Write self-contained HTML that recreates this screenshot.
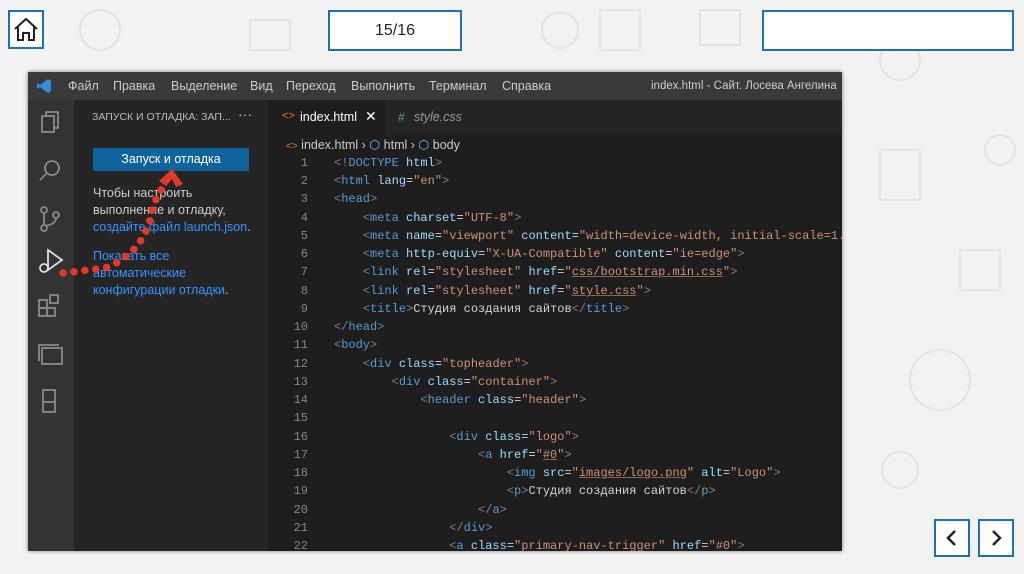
<!DOCTYPE html>
<html><head><meta charset="utf-8"><style>
*{margin:0;padding:0;box-sizing:border-box}
body{width:1024px;height:574px;overflow:hidden;background:#f2f2f2;font-family:"Liberation Sans",sans-serif;position:relative}
.box{position:absolute;border:2px solid #1a6fbf;background:#fff}
.vs{position:absolute;left:28px;top:72px;width:814px;height:479px;background:#1e1e1e;overflow:hidden;box-shadow:0 0 4px rgba(0,0,0,.5)}
.title{position:absolute;left:0;top:0;width:814px;height:28px;background:#3a3a3a;color:#ccc;font-size:12.5px;white-space:nowrap}
.title span{position:absolute;top:7px}
.act{position:absolute;left:0;top:28px;width:46px;height:451px;background:#333}
.side{position:absolute;left:46px;top:28px;width:194px;height:451px;background:#252526;color:#ccc;font-size:12.5px}
.mono{font-family:"Liberation Mono",monospace;font-size:12px}
.ln{position:absolute;left:255px;width:25px;text-align:right;color:#858585}
.cd{position:absolute;left:306px;white-space:pre;color:#d4d4d4}
.b{color:#808080}.t{color:#569cd6}.a{color:#9cdcfe}.s{color:#ce9178}
.u{text-decoration:underline;text-decoration-color:#8a6a50}
</style></head><body>
<svg style="position:absolute;left:0;top:0" width="1024" height="574">
<g fill="none" stroke="#e3e3e3" stroke-width="2">
<circle cx="100" cy="30" r="20"/><rect x="250" y="20" width="40" height="30"/><circle cx="560" cy="30" r="18"/><rect x="600" y="10" width="40" height="40"/><circle cx="900" cy="60" r="20"/><circle cx="940" cy="380" r="30"/><rect x="880" y="150" width="40" height="50"/><rect x="960" y="250" width="40" height="40"/><circle cx="900" cy="470" r="18"/><rect x="700" y="10" width="40" height="35"/><circle cx="1000" cy="150" r="15"/></g></svg>
<div class="box" style="left:8px;top:10px;width:36px;height:39px"><svg width="32" height="35" viewBox="0 0 32 35"><path d="M5 17 L16 7 L27 17 M8 15 V28 H13 V21 H19 V28 H24 V15" fill="none" stroke="#222" stroke-width="2"/></svg></div>
<div class="box" style="left:328px;top:10px;width:134px;height:41px;text-align:center;line-height:37px;font-size:16px;color:#222">15/16</div>
<div class="box" style="left:762px;top:10px;width:252px;height:41px"></div>
<div class="box" style="left:934px;top:519px;width:36px;height:38px"><svg width="32" height="34"><path d="M19 10 L12 17 L19 24" fill="none" stroke="#222" stroke-width="2.5"/></svg></div>
<div class="box" style="left:978px;top:519px;width:36px;height:38px"><svg width="32" height="34"><path d="M13 10 L20 17 L13 24" fill="none" stroke="#222" stroke-width="2.5"/></svg></div>

<div class="vs">
<div class="title">
<svg style="position:absolute;left:8px;top:6px" width="16" height="16"><path d="M12 1 L15 3 V13 L12 15 L4 9 L1 11 V5 L4 7 Z" fill="#2f8fe0"/></svg>
<span style="left:40px">Файл</span><span style="left:85px">Правка</span><span style="left:143px">Выделение</span><span style="left:222px">Вид</span><span style="left:258px">Переход</span><span style="left:323px">Выполнить</span><span style="left:401px">Терминал</span><span style="left:474px">Справка</span><span style="left:623px;font-size:11.5px;top:8px">index.html - Сайт. Лосева Ангелина</span></div>
<div class="act">
<svg width="46" height="451" fill="none" stroke="#8a8a8a" stroke-width="1.8">
<rect x="14" y="16" width="12" height="16"/><path d="M18 16 V12 H30 V28 H26"/>
<circle cx="24" cy="68" r="7"/><path d="M19 73 L12 80"/>
<circle cx="16" cy="110" r="3"/><circle cx="16" cy="128" r="3"/><circle cx="28" cy="115" r="3"/><path d="M16 113 V125 M28 118 Q28 124 17 126"/>
<path d="M20 150 L34 160 L20 170 Z" stroke="#ddd"/><circle cx="16" cy="168" r="4" stroke="#ddd"/>
<rect x="11" y="208" width="8" height="8"/><rect x="19" y="208" width="8" height="8"/><rect x="11" y="200" width="8" height="8"/><rect x="22" y="195" width="8" height="8"/>
<rect x="14" y="248" width="20" height="16"/><path d="M11 261 V245 H31"/>
<rect x="15" y="290" width="12" height="22"/><path d="M15 302 H27"/>
</svg></div>
<div class="side">
<div style="position:absolute;left:18px;top:11px;font-size:10.5px;color:#bbb">ЗАПУСК И ОТЛАДКА: ЗАП...</div>
<div style="position:absolute;left:164px;top:6px;font-size:14px;color:#ccc">···</div>
<div style="position:absolute;left:19px;top:48px;width:156px;height:23px;background:#0e639c;color:#fff;text-align:center;line-height:22px">Запуск и отладка</div>
<div style="position:absolute;left:19px;top:85px;line-height:17px;width:170px">Чтобы настроить<br>выполнение и отладку,<br><span style="color:#3794ff">создайте файл launch.json</span>.</div>
<div style="position:absolute;left:19px;top:148px;line-height:17px;width:170px;color:#3794ff">Показать все<br>автоматические<br>конфигурации отладки<span style="color:#ccc">.</span></div>
</div>
<div style="position:absolute;left:240px;top:28px;width:574px;height:35px;background:#252526"></div>
<div style="position:absolute;left:240px;top:28px;width:117px;height:35px;background:#1e1e1e;color:#fff;font-size:12.5px"><span style="position:absolute;left:14px;top:10px;color:#e37933;font-size:11px">&lt;&gt;</span><span style="position:absolute;left:32px;top:10px">index.html</span><span style="position:absolute;left:97px;top:8px;font-size:14px">✕</span></div>
<div style="position:absolute;left:370px;top:38px;color:#519aba;font-size:12px">#</div>
<div style="position:absolute;left:386px;top:38px;color:#999;font-size:12.5px;font-style:italic">style.css</div>
<div style="position:absolute;left:258px;top:65px;color:#ccc;font-size:12.5px"><span style="color:#e37933;font-size:10px">&lt;&gt;</span> index.html › <span style="color:#75beff">⬡</span> html › <span style="color:#75beff">⬡</span> body</div>
<div class="mono">
<div class="ln" style="top:84px">1</div><div class="cd" style="top:84px"><span class="b">&lt;!</span><span class="t">DOCTYPE</span> <span class="a">html</span><span class="b">&gt;</span></div>
<div class="ln" style="top:102px">2</div><div class="cd" style="top:102px"><span class="b">&lt;</span><span class="t">html</span> <span class="a">lang</span>=<span class="s">"en"</span><span class="b">&gt;</span></div>
<div class="ln" style="top:120px">3</div><div class="cd" style="top:120px"><span class="b">&lt;</span><span class="t">head</span><span class="b">&gt;</span></div>
<div class="ln" style="top:139px">4</div><div class="cd" style="top:139px">    <span class="b">&lt;</span><span class="t">meta</span> <span class="a">charset</span>=<span class="s">"UTF-8"</span><span class="b">&gt;</span></div>
<div class="ln" style="top:157px">5</div><div class="cd" style="top:157px">    <span class="b">&lt;</span><span class="t">meta</span> <span class="a">name</span>=<span class="s">"viewport"</span> <span class="a">content</span>=<span class="s">"width=device-width, initial-scale=1.0"</span></div>
<div class="ln" style="top:175px">6</div><div class="cd" style="top:175px">    <span class="b">&lt;</span><span class="t">meta</span> <span class="a">http-equiv</span>=<span class="s">"X-UA-Compatible"</span> <span class="a">content</span>=<span class="s">"ie=edge"</span><span class="b">&gt;</span></div>
<div class="ln" style="top:193px">7</div><div class="cd" style="top:193px">    <span class="b">&lt;</span><span class="t">link</span> <span class="a">rel</span>=<span class="s">"stylesheet"</span> <span class="a">href</span>=<span class="s">"<span class="u">css/bootstrap.min.css</span>"</span><span class="b">&gt;</span></div>
<div class="ln" style="top:212px">8</div><div class="cd" style="top:212px">    <span class="b">&lt;</span><span class="t">link</span> <span class="a">rel</span>=<span class="s">"stylesheet"</span> <span class="a">href</span>=<span class="s">"<span class="u">style.css</span>"</span><span class="b">&gt;</span></div>
<div class="ln" style="top:230px">9</div><div class="cd" style="top:230px">    <span class="b">&lt;</span><span class="t">title</span><span class="b">&gt;</span>Студия создания сайтов<span class="b">&lt;/</span><span class="t">title</span><span class="b">&gt;</span></div>
<div class="ln" style="top:248px">10</div><div class="cd" style="top:248px"><span class="b">&lt;/</span><span class="t">head</span><span class="b">&gt;</span></div>
<div class="ln" style="top:266px">11</div><div class="cd" style="top:266px"><span class="b">&lt;</span><span class="t">body</span><span class="b">&gt;</span></div>
<div class="ln" style="top:285px">12</div><div class="cd" style="top:285px">    <span class="b">&lt;</span><span class="t">div</span> <span class="a">class</span>=<span class="s">"topheader"</span><span class="b">&gt;</span></div>
<div class="ln" style="top:303px">13</div><div class="cd" style="top:303px">        <span class="b">&lt;</span><span class="t">div</span> <span class="a">class</span>=<span class="s">"container"</span><span class="b">&gt;</span></div>
<div class="ln" style="top:321px">14</div><div class="cd" style="top:321px">            <span class="b">&lt;</span><span class="t">header</span> <span class="a">class</span>=<span class="s">"header"</span><span class="b">&gt;</span></div>
<div class="ln" style="top:339px">15</div>
<div class="ln" style="top:358px">16</div><div class="cd" style="top:358px">                <span class="b">&lt;</span><span class="t">div</span> <span class="a">class</span>=<span class="s">"logo"</span><span class="b">&gt;</span></div>
<div class="ln" style="top:376px">17</div><div class="cd" style="top:376px">                    <span class="b">&lt;</span><span class="t">a</span> <span class="a">href</span>=<span class="s">"<span class="u">#0</span>"</span><span class="b">&gt;</span></div>
<div class="ln" style="top:394px">18</div><div class="cd" style="top:394px">                        <span class="b">&lt;</span><span class="t">img</span> <span class="a">src</span>=<span class="s">"<span class="u">images/logo.png</span>"</span> <span class="a">alt</span>=<span class="s">"Logo"</span><span class="b">&gt;</span></div>
<div class="ln" style="top:412px">19</div><div class="cd" style="top:412px">                        <span class="b">&lt;</span><span class="t">p</span><span class="b">&gt;</span>Студия создания сайтов<span class="b">&lt;/</span><span class="t">p</span><span class="b">&gt;</span></div>
<div class="ln" style="top:431px">20</div><div class="cd" style="top:431px">                    <span class="b">&lt;/</span><span class="t">a</span><span class="b">&gt;</span></div>
<div class="ln" style="top:449px">21</div><div class="cd" style="top:449px">                <span class="b">&lt;/</span><span class="t">div</span><span class="b">&gt;</span></div>
<div class="ln" style="top:467px">22</div><div class="cd" style="top:467px">                <span class="b">&lt;</span><span class="t">a</span> <span class="a">class</span>=<span class="s">"primary-nav-trigger"</span> <span class="a">href</span>=<span class="s">"#0"</span><span class="b">&gt;</span></div>
</div>
</div>
<svg style="position:absolute;left:0;top:0" width="1024" height="574">
<path d="M63 273 L105 268 Q140 255 150 220 Q155 195 165 185" fill="none" stroke="#e0392b" stroke-width="7.5" stroke-linecap="round" stroke-dasharray="0 11"/>
<path d="M159 181 L172 169 L183 184 L176 187 L172 179 L166 186 Z" fill="#e0392b"/>
</svg>
</body></html>
